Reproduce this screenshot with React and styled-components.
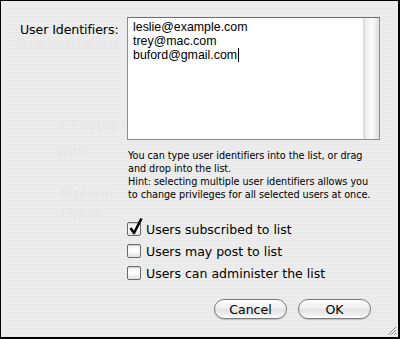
import React from 'react';
import styled, { createGlobalStyle } from 'styled-components';

const GlobalStyle = createGlobalStyle`
  html, body {
    margin: 0;
    padding: 0;
    background: #ececec;
  }
`;

const Sheet = styled.div`
  position: relative;
  box-sizing: border-box;
  width: 400px;
  height: 339px;
  border: 1px solid #000;
  border-right-width: 2px;
  border-bottom-width: 2px;
  overflow: hidden;
  background: repeating-linear-gradient(
    to bottom,
    #eeeeee 0px,
    #eeeeee 1px,
    #e8e8e8 1px,
    #e8e8e8 2px
  );
  font-family: 'DejaVu Sans', 'Lucida Grande', sans-serif;
  color: #000;
  display: flex;
  flex-direction: column;
`;

const Ghost = styled.span`
  position: absolute;
  color: rgba(0, 0, 0, 0.045);
  font-size: ${(p) => p.size || 12}px;
  white-space: nowrap;
  pointer-events: none;
`;

const Body = styled.div`
  position: relative;
  display: grid;
  grid-template-columns: 126px 253px;
  padding-top: 16px;
`;

const FieldLabel = styled.div`
  padding: 5px 0 0 19px;
  font-size: 12.6px;
  letter-spacing: -0.1px;
`;

const Main = styled.div`
  display: flex;
  flex-direction: column;
`;

const ListBox = styled.div`
  display: flex;
  height: 123px;
  border: 1px solid #8d8d8d;
  border-top-color: #6f6f6f;
  background: #fff;
  box-sizing: border-box;
`;

const ListText = styled.div`
  flex: 1;
  padding: 2px 0 0 5px;
  font-family: 'Liberation Sans', Arial, sans-serif;
  font-size: 12.4px;
  line-height: 14px;
`;

const Line = styled.div``;

const Caret = styled.span`
  display: inline-block;
  width: 1px;
  height: 14px;
  margin-left: 1px;
  vertical-align: -3px;
  background: #000;
`;

const ScrollTrack = styled.div`
  width: 15px;
  background: linear-gradient(
    to right,
    #e2e2e2 0%,
    #efefef 20%,
    #fbfbfb 45%,
    #f4f4f4 65%,
    #dedede 100%
  );
  border-left: 1px solid #dadada;
`;

const Help = styled.p`
  margin: 9px 0 0 1px;
  font-size: 9.7px;
  line-height: 13px;
  letter-spacing: -0.05px;
`;

const Checks = styled.div`
  display: flex;
  flex-direction: column;
  gap: 8px;
  margin-top: 21px;
`;

const CheckRow = styled.label`
  display: flex;
  align-items: center;
  gap: 5px;
  font-size: 12.5px;
  height: 14px;
`;

const Box = styled.span`
  position: relative;
  flex: none;
  display: inline-block;
  width: 14px;
  height: 14px;
  box-sizing: border-box;
  border: 1px solid #6a6a6a;
  border-radius: 2px;
  background: linear-gradient(to bottom, #f2f2f2 0%, #ffffff 50%, #e2e2e2 100%);
  box-shadow: inset 0 1px 1px rgba(0, 0, 0, 0.15);
`;

const Tick = styled.svg`
  position: absolute;
  left: 1px;
  top: -5px;
  overflow: visible;
`;

const Buttons = styled.div`
  display: flex;
  justify-content: flex-end;
  gap: 11px;
  padding: 0 27px 0 0;
  margin-top: auto;
  margin-bottom: 18px;
`;

const PushButton = styled.button`
  width: 73px;
  height: 20px;
  padding: 0;
  border: 1px solid #7c7c7c;
  border-radius: 10px;
  font-family: 'DejaVu Sans', 'Lucida Grande', sans-serif;
  font-size: 12.5px;
  color: #000;
  background: linear-gradient(
    to bottom,
    #fdfdfd 0%,
    #f0f0f0 45%,
    #e2e2e2 50%,
    #eeeeee 80%,
    #ffffff 100%
  );
  box-shadow: 0 1px 1px rgba(0, 0, 0, 0.2);
`;

const Grip = styled.svg`
  position: absolute;
  right: 1px;
  bottom: 1px;
`;

const Check = ({ checked, children }) => (
  <CheckRow>
    <Box>
      {checked && (
        <Tick width="14" height="17" viewBox="0 0 14 17">
          <path
            d="M1.5 10 L5 15 L12.5 0.5"
            fill="none"
            stroke="#000"
            strokeWidth="2.6"
            strokeLinejoin="round"
          />
        </Tick>
      )}
    </Box>
    {children}
  </CheckRow>
);

export default function App() {
  return (
    <>
      <GlobalStyle />
      <Sheet>
        <Ghost style={{ left: 18, top: 36 }} size={11}>Relational Servers</Ghost>
        <Ghost style={{ left: 56, top: 116 }} size={13}>✓ Enable m</Ghost>
        <Ghost style={{ left: 56, top: 143 }} size={12}>Lists</Ghost>
        <Ghost style={{ left: 61, top: 186 }} size={12}>Mailman</Ghost>
        <Ghost style={{ left: 61, top: 205 }} size={12}>MyList</Ghost>
        <Body>
          <FieldLabel>User Identifiers:</FieldLabel>
          <Main>
            <ListBox>
              <ListText>
                <Line>leslie@example.com</Line>
                <Line>trey@mac.com</Line>
                <Line>
                  buford@gmail.com
                  <Caret />
                </Line>
              </ListText>
              <ScrollTrack />
            </ListBox>
            <Help>
              You can type user identifiers into the list, or drag
              <br />
              and drop into the list.
              <br />
              Hint: selecting multiple user identifiers allows you
              <br />
              to change privileges for all selected users at once.
            </Help>
            <Checks>
              <Check checked>Users subscribed to list</Check>
              <Check>Users may post to list</Check>
              <Check>Users can administer the list</Check>
            </Checks>
          </Main>
        </Body>
        <Buttons>
          <PushButton>Cancel</PushButton>
          <PushButton>OK</PushButton>
        </Buttons>
        <Grip width="12" height="12" viewBox="0 0 12 12">
          <path d="M11 3 L3 11 M11 6 L6 11 M11 9 L9 11" stroke="#8a8a8a" strokeWidth="1" />
        </Grip>
      </Sheet>
    </>
  );
}
